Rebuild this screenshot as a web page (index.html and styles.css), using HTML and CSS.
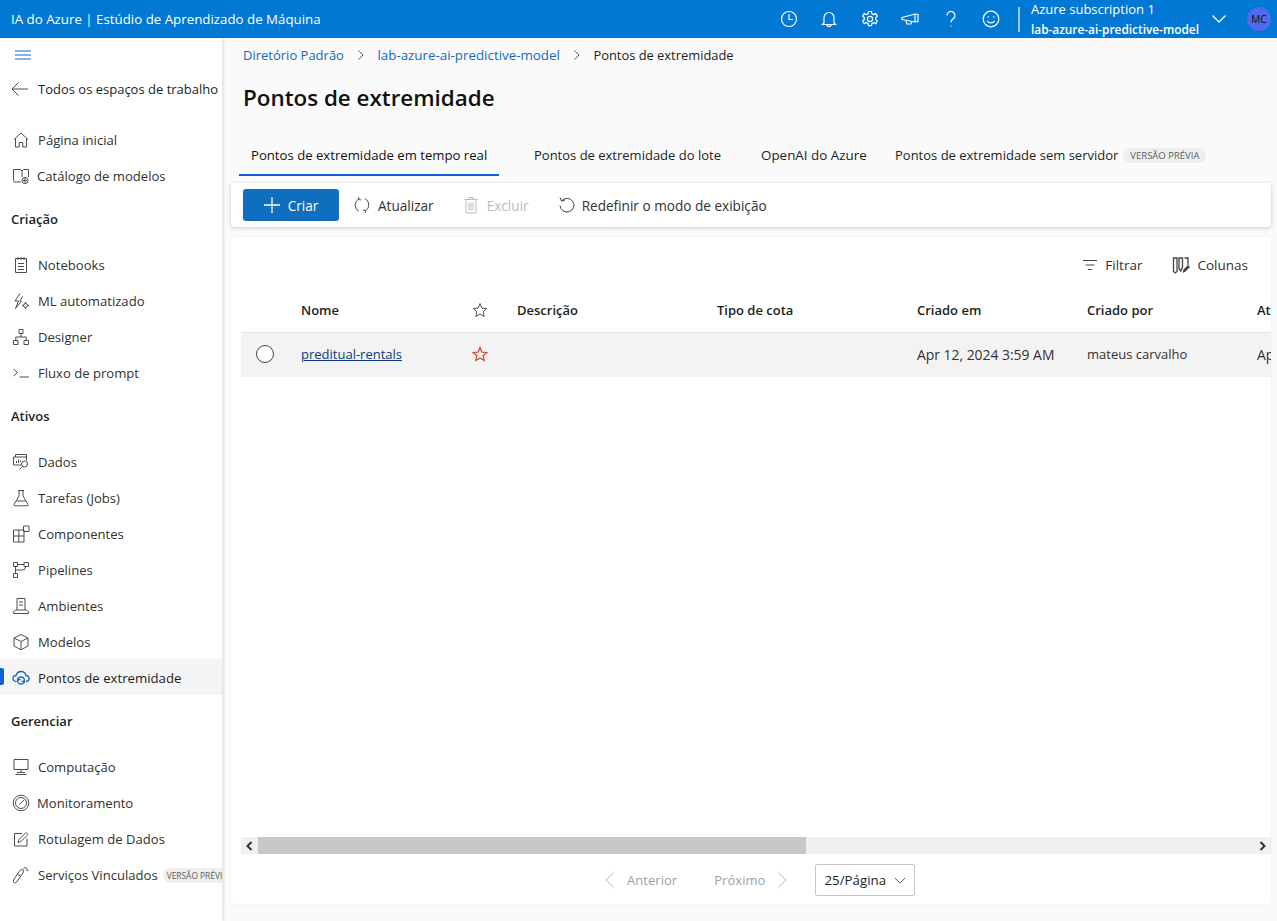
FILE: index.html
```html
<!DOCTYPE html>
<html lang="pt">
<head>
<meta charset="utf-8">
<title>Pontos de extremidade</title>
<link rel="stylesheet" href="styles.css">
</head>
<body>
<header class="topbar">
  <div class="brand">IA do Azure | Estúdio de Aprendizado de Máquina</div>
  <div class="top-icons">
    <svg class="ti" viewBox="0 0 20 20"><circle cx="10" cy="10" r="7.5"/><path d="M10 5v5.5h4"/></svg>
    <svg class="ti" viewBox="0 0 20 20"><path d="M5 14V8.500a5 5 0 0 1 10 0V14l1.500 1.500h-13zM8 15.500a2 2 0 0 0 4 0"/></svg>
    <svg class="ti" viewBox="0 0 20 20"><circle cx="10" cy="10" r="2.600"/><path d="M8.500 2.500h3l.5 2.300 1.700.8 2.100-1 1.500 2.600-1.700 1.500v1.800l1.700 1.500-1.500 2.600-2.100-1-1.700.8-.5 2.300h-3l-.5-2.300-1.700-.8-2.100 1-1.500-2.600 1.700-1.500V8.700L2.700 7.200l1.500-2.600 2.100 1 1.700-.8z"/></svg>
    <svg class="ti" viewBox="0 0 20 20"><path d="M2 8.500l13-3.500 3 .5v7l-3 .5-13-2.500zM15 5v8M6 12l1 3h4l.5-2"/></svg>
    <svg class="ti" viewBox="0 0 20 20"><path d="M6 6.500a4 4 0 1 1 6.200 3.300c-1.300.9-2.200 1.600-2.200 3.400"/><path d="M10 16.500v1"/></svg>
    <svg class="ti" viewBox="0 0 20 20"><circle cx="10" cy="10" r="7.800"/><path d="M6.300 11.700a4.200 4.200 0 0 0 7.400 0M7.300 7.300v1.400M12.700 7.300v1.400"/></svg>
  </div>
  <div class="top-divider"></div>
  <div class="account">
    <div class="sub">Azure subscription 1</div>
    <div class="wsname">lab-azure-ai-predictive-model</div>
  </div>
  <svg class="top-chev" viewBox="0 0 16 16"><path d="M1.500 4.500L8 11l6.500-6.500"/></svg>
  <div class="avatar">MC</div>
</header>

<div class="shell">
  <nav class="sidebar">
    <div class="burger"><svg class="burger-icon" viewBox="0 0 16 10"><path d="M0 1h16M0 5h16M0 9h16"/></svg></div>
    <a class="nav back"><svg class="ic" viewBox="0 0 18 18"><path d="M17 9H1M7.500 2.500L1 9l6.500 6.500"/></svg><span>Todos os espaços de trabalho</span></a>
    <div class="nav-group first">
      <a class="nav"><svg class="ic" viewBox="0 0 18 18"><path d="M2 8.500L9 2l7 6.500M3.500 7.500V16h3.700v-4.500h3.600V16h3.700V7.500"/></svg><span>Página inicial</span></a>
      <a class="nav tight"><svg class="ic" viewBox="0 0 18 18"><path d="M9 15H3a1.500 1.500 0 0 1-1.500-1.500V2.500H8.500L10 4v6M10 4l1.500-1.500h5V10"/><circle cx="13" cy="13.500" r="3"/><path d="M11 13.500h4M13 11v5"/></svg><span>Catálogo de modelos</span></a>
    </div>
    <div class="section">Criação</div>
    <a class="nav"><svg class="ic" viewBox="0 0 18 18"><path d="M3.500 2.500h11v14h-11zM6 1v3M9 1v3M12 1v3M6 7.500h6M6 10.500h6M6 13.500h6"/></svg><span>Notebooks</span></a>
    <a class="nav"><svg class="ic" viewBox="0 0 18 18"><path d="M8 1.500L3 9h3.500L3.500 16.500 9.500 9H8l2.500-4.500"/><circle cx="13.500" cy="13.500" r="2"/><path d="M13.500 10v1.500M13.500 15.500V17M10 13.500h1.500M15.500 13.500H17"/></svg><span>ML automatizado</span></a>
    <a class="nav"><svg class="ic" viewBox="0 0 18 18"><path d="M7 1.500h4v4H7zM1.500 12.500h4.500v4H1.500zM12 12.500h4.500v4H12zM9 5.500v3.500M3.800 12.500V9h10.400v3.500"/></svg><span>Designer</span></a>
    <a class="nav"><svg class="ic" viewBox="0 0 18 18"><path d="M1.500 5l4 3.500-4 3.500M7.500 13H17"/></svg><span>Fluxo de prompt</span></a>
    <div class="section">Ativos</div>
    <a class="nav"><svg class="ic" viewBox="0 0 18 18"><path d="M3.500 4V1.500h11v3M1.500 12V4h13v3.500M1.500 12H9M4.500 10V8M6.500 10V6.500M8.500 9V7.500"/><circle cx="12.500" cy="11" r="3"/><path d="M10.500 13.500L7.500 16.500"/></svg><span>Dados</span></a>
    <a class="nav"><svg class="ic" viewBox="0 0 18 18"><path d="M6 1.500h6M7 1.500v5.500L2 15.500a1 1 0 0 0 1 1.300h12a1 1 0 0 0 1-1.300L11 7V1.500M4.500 12h9"/></svg><span>Tarefas (Jobs)</span></a>
    <a class="nav"><svg class="ic" viewBox="0 0 18 18"><path d="M1.500 5h10.500v12H1.500zM1.500 11h10.500M6.800 5v12M11.500 1h5.500v5.500h-5.500z"/></svg><span>Componentes</span></a>
    <a class="nav"><svg class="ic" viewBox="0 0 18 18"><path d="M1.500 1.500h4v4h-4zM12 1.500h4.500v4H12zM1.500 12.500h4v4h-4zM3.500 5.500v7M5.500 3.500h6.500M3.500 9h7a3 3 0 0 0 3-3"/></svg><span>Pipelines</span></a>
    <a class="nav"><svg class="ic" viewBox="0 0 18 18"><path d="M5 13V1.500h8V13M1.500 16.500h15v-1.500l-2-2h-11l-2 2zM7 5h4M7 8h4"/></svg><span>Ambientes</span></a>
    <a class="nav"><svg class="ic" viewBox="0 0 18 18"><path d="M9 1.500l7 3.500v8l-7 3.800L2 13V5zM2 5l7 3.500L16 5M9 8.500v8.300"/></svg><span>Modelos</span></a>
    <a class="nav active"><svg class="ic ic-blue" viewBox="0 0 18 18"><path d="M4.500 12.500C2 12.500 1 11 1 9.500c0-1.800 1.400-3 3-3C5 3.500 7 2.500 9 2.500c2.600 0 4.500 1.800 5 4 1.800 0 3 1.300 3 3 0 1.600-1.200 3-3 3"/><circle cx="9" cy="11.500" r="3.500"/><path d="M5.500 9l1 2 2-.7M12.500 14l-1-2-2 .7"/></svg><span>Pontos de extremidade</span></a>
    <div class="section">Gerenciar</div>
    <a class="nav"><svg class="ic" viewBox="0 0 18 18"><path d="M2 1.500h14v10H2zM9 11.500V14M3.500 16.500h11M5 14.500h8"/></svg><span>Computação</span></a>
    <a class="nav tight"><svg class="ic" viewBox="0 0 18 18"><circle cx="9" cy="9" r="7.800"/><circle cx="9" cy="9" r="5.500"/><path d="M7.500 10.500L12 6"/></svg><span>Monitoramento</span></a>
    <a class="nav"><svg class="ic" viewBox="0 0 18 18"><path d="M15 8.500v7.500H2.500V3.500H10M6 12.500l1-3L14 2.500l2 2-7 7z"/></svg><span>Rotulagem de Dados</span></a>
    <a class="nav"><svg class="ic" viewBox="0 0 18 18"><path d="M1.500 15.500c0 1.500 2 1.800 3 .5l6.500-9c1-1.500.5-3-.7-3.300-1-.3-2 .2-2.700 1.200L2 13c-.4.700-.5 1.500-.5 2.500zM5.500 8l3.500 2.500M11 3.500c.8-1.500 2-2.300 3-2 1 .3 1 1.500.5 2.500l2 .5"/></svg><span>Serviços Vinculados</span><em class="badge side-badge">VERSÃO PRÉVIA</em></a>
  </nav>

  <main class="main">
    <div class="crumbs">
      <a>Diretório Padrão</a><svg class="crumb-sep" viewBox="0 0 8 12"><path d="M1.500 1.500L6 6l-4.500 4.500"/></svg>
      <a>lab-azure-ai-predictive-model</a><svg class="crumb-sep" viewBox="0 0 8 12"><path d="M1.500 1.500L6 6l-4.500 4.500"/></svg>
      <span>Pontos de extremidade</span>
    </div>
    <h1 class="title">Pontos de extremidade</h1>
    <div class="tabs">
      <div class="tab tab-active">Pontos de extremidade em tempo real</div>
      <div class="tab tab-batch">Pontos de extremidade do lote</div>
      <div class="tab tab-openai">OpenAI do Azure</div>
      <div class="tab tab-serverless">Pontos de extremidade sem servidor<em class="badge">VERSÃO PRÉVIA</em></div>
    </div>

    <div class="card toolbar">
      <button class="primary"><svg class="plus" viewBox="0 0 16 16"><path d="M8 0v16M0 8h16"/></svg>Criar</button>
      <button class="tool"><svg class="tool-ic" viewBox="0 0 18 18"><path d="M5.500 3.200A7 7 0 0 0 6 15.300M5.800 1l-.3 2.500 2.500.4M12.500 14.800A7 7 0 0 0 12 2.700M12.200 17l.3-2.500-2.500-.4"/></svg>Atualizar</button>
      <button class="tool disabled"><svg class="tool-ic" viewBox="0 0 18 18"><path d="M2.500 3.500h13M7 3.500V1.500h4v2M4 3.500V17h10V3.500M7 6.500v8M9 6.500v8M11 6.500v8"/></svg>Excluir</button>
      <button class="tool"><svg class="tool-ic" viewBox="0 0 18 18"><path d="M4.500 5A7 6.800 0 1 1 3 9.500M3 1.500L4.500 5 8 4"/></svg>Redefinir o modo de exibição</button>
    </div>

    <section class="card tablecard">
      <div class="table-tools">
        <span class="tt"><svg class="tool-ic" viewBox="0 0 16 16"><path d="M1 3.500h14M3.500 8h9M6 12.500h4"/></svg>Filtrar</span>
        <span class="tt"><svg class="col-ic" viewBox="0 0 18 18"><path d="M1.500 2h3.500v13.500l-1.700 1.500-1.800-1.500zM7 2h3.500v9L8.800 15 7 13zM12.500 2H16v7"/><path class="solid" d="M10.500 17l1-3.500 4.500-4.500 2 2-4.500 4.500z"/></svg>Colunas</span>
      </div>
      <div class="table-wrap">
        <div class="row head">
          <div></div><div>Nome</div>
          <div class="star-cell"><svg class="star" viewBox="0 0 16 16"><path d="M8 1.500l1.900 4.600 4.900.4-3.700 3.200 1.100 4.800L8 12l-4.200 2.500 1.100-4.800L1.200 6.500l4.900-.4z"/></svg></div>
          <div>Descrição</div><div>Tipo de cota</div><div>Criado em</div><div>Criado por</div><div>Atualizado em</div>
        </div>
        <div class="row body">
          <div class="radio-cell"><span class="radio"></span></div>
          <div><a class="link">preditual-rentals</a></div>
          <div class="star-cell"><svg class="star star-red" viewBox="0 0 16 16"><path d="M8 1.500l1.900 4.600 4.900.4-3.700 3.200 1.100 4.800L8 12l-4.200 2.500 1.100-4.800L1.200 6.500l4.900-.4z"/></svg></div>
          <div></div><div></div><div class="date">Apr 12, 2024 3:59 AM</div><div>mateus carvalho</div><div class="date">Apr 12, 2024 3:59 AM</div>
        </div>
      </div>
      <div class="hscroll">
        <svg class="sb-arrow" viewBox="0 0 8 10"><path d="M6 1L2 5l4 4"/></svg>
        <div class="track"><div class="thumb"></div></div>
        <svg class="sb-arrow" viewBox="0 0 8 10"><path d="M2 1l4 4-4 4"/></svg>
      </div>
      <div class="pager">
        <span class="pg"><svg class="pg-ic" viewBox="0 0 12 18"><path d="M10.500 1L2 9l8.500 8"/></svg>Anterior</span>
        <span class="pg pg-next">Próximo<svg class="pg-ic" viewBox="0 0 12 18"><path d="M1.500 1L10 9l-8.500 8"/></svg></span>
        <span class="pagesize">25/Página<svg class="ps-ic" viewBox="0 0 14 8"><path d="M1 1l6 6 6-6"/></svg></span>
      </div>
    </section>
  </main>
</div>
</body>
</html>
```
FILE: styles.css
```css
* { box-sizing: border-box; }
html, body { height: 100%; }
body {
  margin: 0;
  height: 921px;
  overflow: hidden;
  font-family: "Open Sans", "Noto Sans", sans-serif;
  font-size: 13px;
  color: #201f1e;
  background: #fafafa;
  display: flex;
  flex-direction: column;
}
svg { fill: none; stroke: currentColor; stroke-width: 1; flex: none; display: block; }
a { color: inherit; }

/* Top bar */
.topbar {
  height: 38px;
  flex: none;
  background: #0078d4;
  color: #fff;
  display: flex;
  align-items: center;
  padding-left: 11px;
}
.brand { font-size: 13.3px; font-weight: 500; width: 768px; white-space: nowrap; }
.top-icons { display: flex; align-items: center; gap: 20.4px; }
.ti { width: 20px; height: 20px; stroke-width: 1.2; }
.top-divider { width: 2px; height: 25px; background: rgba(255,255,255,.6); margin: 0 11px 0 17px; }
.account { width: 172px; white-space: nowrap; }
.sub { font-size: 13px; line-height: 20px; }
.wsname { font-size: 11.85px; font-weight: 600; line-height: 20px; }
.top-chev { width: 16px; height: 16px; margin-left: 8px; stroke-width: 1.3; }
.avatar {
  width: 24px; height: 24px; border-radius: 50%;
  background: #4f6bed; color: #111;
  font-size: 10px; font-weight: 500;
  display: flex; align-items: center; justify-content: center;
  margin-left: 20px;
}

.shell { flex: 1; display: flex; min-height: 0; }

/* Sidebar */
.sidebar {
  width: 222px;
  flex: none;
  background: #fff;
  box-shadow: 1px 0 4px rgba(0,0,0,.14);
  overflow: hidden;
  z-index: 1;
  white-space: nowrap;
}
.burger { height: 33px; padding: 12px 0 0 15px; }
.burger-icon { width: 16px; height: 10px; color: #0f62d6; }
.nav {
  height: 36px;
  display: flex;
  align-items: center;
  padding-left: 12px;
  gap: 8px;
  color: #323130;
  font-size: 13.1px;
}
.nav.tight { gap: 7px; }
.ic { width: 18px; height: 18px; color: #4d4d4d; }
.ic-blue { color: #0f6cbd; stroke-width: 1.3; }
.back { color: #201f1e; font-size: 13px; }
.back .ic { margin-left: -1px; margin-right: 1px; }
.nav-group.first { margin-top: 15px; }
.section {
  height: 53px;
  padding: 15px 0 0 11px;
  line-height: 20px;
  font-weight: 600;
  color: #201f1e;
}
.nav.active {
  background: #f5f5f5;
  color: #201f1e;
  font-weight: 500;
  font-size: 13.2px;
  position: relative;
  margin: -1px 0 1px;
  padding-top: 2px;
}
.active::before {
  content: "";
  position: absolute;
  left: 0; top: 9px;
  width: 4px; height: 17px;
  border-radius: 0 2px 2px 0;
  background: #0f62d6;
}
.badge {
  font-style: normal;
  font-size: 9.5px;
  color: #605e5c;
  background: #eeeeee;
  border-radius: 8px;
  padding: 0 7px;
  line-height: 15px;
  height: 15px;
  margin-left: 5px;
  white-space: nowrap;
  display: inline-block;
  vertical-align: 1px;
}
.side-badge { flex: none; font-size: 8.4px; margin-left: -3px; padding: 0 4px; }

/* Main */
.main { flex: 1; min-width: 0; padding: 0 6px 17px 9px; display: flex; flex-direction: column; }
.crumbs {
  height: 34px;
  display: flex;
  align-items: center;
  padding-left: 12px;
  color: #0f6cbd;
  white-space: nowrap;
}
.crumbs a:nth-of-type(2) { font-size: 13.35px; }
.crumbs span { color: #201f1e; font-size: 12.9px; }
.crumb-sep { width: 8px; height: 12px; margin: 0 12.5px 0 13px; color: #605e5c; }
.title {
  margin: 0;
  padding-left: 12px;
  font-size: 22.4px;
  font-weight: 600;
  line-height: 30px;
  height: 49px;
  padding-top: 11px;
  color: #111;
  white-space: nowrap;
}
.tabs {
  height: 49px;
  margin: 15px 0 0 8px;
  display: flex;
  white-space: nowrap;
  flex: none;
}
.tab { height: 40px; padding-top: 9px; line-height: 20px; }
.tab-active {
  width: 260px;
  padding-left: 12px;
  font-weight: 500;
  font-size: 13.15px;
  color: #111;
  border-bottom: 2px solid #0f62d6;
}
.tab-batch { margin-left: 35px; width: 227px; }
.tab-openai { width: 134px; font-size: 13.4px; }

.card {
  background: #fff;
  border-radius: 4px;
}
.toolbar {
  height: 44px;
  margin-top: -2px;
  display: flex;
  align-items: center;
  padding-left: 12px;
  box-shadow: 0 1px 4px rgba(0,0,0,.2);
  flex: none;
}
.primary {
  width: 96px; height: 32px;
  background: #106ebe;
  color: #fff;
  border: 0;
  border-radius: 3px;
  font: 500 13.6px "Open Sans", sans-serif;
  display: flex;
  align-items: center;
  justify-content: center;
  gap: 8px;
  margin-right: 14px;
  padding: 0;
}
.plus { width: 16px; height: 16px; stroke-width: 1.3; }
.tool {
  background: none;
  border: 0;
  padding: 0;
  font: 500 13.6px "Open Sans", sans-serif;
  color: #323130;
  display: flex;
  align-items: center;
  gap: 7px;
  margin-right: 28px;
  white-space: nowrap;
}
.tool-ic { width: 18px; height: 18px; color: #444; }
.disabled { color: #bdbbb9; }
.disabled .tool-ic { color: #bdbbb9; }

.tablecard {
  flex: 1;
  margin-top: 10px;
  min-height: 0;
  display: flex;
  flex-direction: column;
  box-shadow: 0 0 2px rgba(0,0,0,.1);
  overflow: hidden;
  padding-left: 10px;
}
.table-tools {
  height: 56px;
  flex: none;
  display: flex;
  justify-content: flex-end;
  align-items: center;
  gap: 30px;
  padding-right: 23px;
  font-weight: 500;
  font-size: 13.5px;
  color: #323130;
}
.tt { display: flex; align-items: center; gap: 7px; }
.tt .tool-ic { width: 16px; height: 16px; }
.col-ic { width: 18px; height: 18px; color: #444; stroke-width: 1.3; }
.col-ic .solid { fill: #444; stroke: none; }

.table-wrap { flex: 1; min-height: 0; overflow: hidden; }
.row {
  display: grid;
  grid-template-columns: 60px 172px 44px 200px 200px 170px 170px 170px;
  align-items: center;
  white-space: nowrap;
}
.head { height: 40px; font-weight: 600; color: #201f1e; border-bottom: 1px solid #e6e6e6; padding-bottom: 6px; }
.body { height: 44px; background: #f3f3f3; color: #323130; padding-bottom: 2px; }
.date { font-size: 13.9px; }
.star { width: 16px; height: 16px; margin-left: -1px; color: #555; }
.star-red { color: #d1492e; stroke-width: 1.2; }
.radio-cell { padding-left: 15px; display: flex; }
.radio { width: 18px; height: 18px; border: 1.5px solid #444; border-radius: 50%; background: #fff; }
.link { color: #0b3a82; text-decoration: underline; }

.hscroll {
  flex: none;
  height: 17px;
  display: flex;
  align-items: center;
  background: #f0f0f0;
}
.sb-arrow { width: 17px; height: 10px; color: #333; stroke-width: 2; }
.track { flex: 1; height: 17px; }
.thumb { width: 548px; height: 17px; background: #c8c8c8; }
.pager {
  flex: none;
  height: 50px;
  display: flex;
  align-items: center;
  padding: 2px 0 0 363px;
  color: #a19f9d;
  font-weight: 500;
  font-size: 13.1px;
  white-space: nowrap;
}
.pg { display: flex; align-items: center; gap: 11px; }
.pg-ic { width: 12px; height: 18px; color: #bbb; }
.pg-next { margin-left: 37px; }
.pagesize {
  margin-left: 27px;
  width: 100px;
  height: 32px;
  border: 1px solid #c8c6c4;
  border-radius: 2px;
  color: #201f1e;
  font-weight: 400;
  font-size: 13.3px;
  display: flex;
  align-items: center;
  padding-left: 8px;
  gap: 8px;
}
.ps-ic { width: 12px; height: 7px; color: #444; }
```
